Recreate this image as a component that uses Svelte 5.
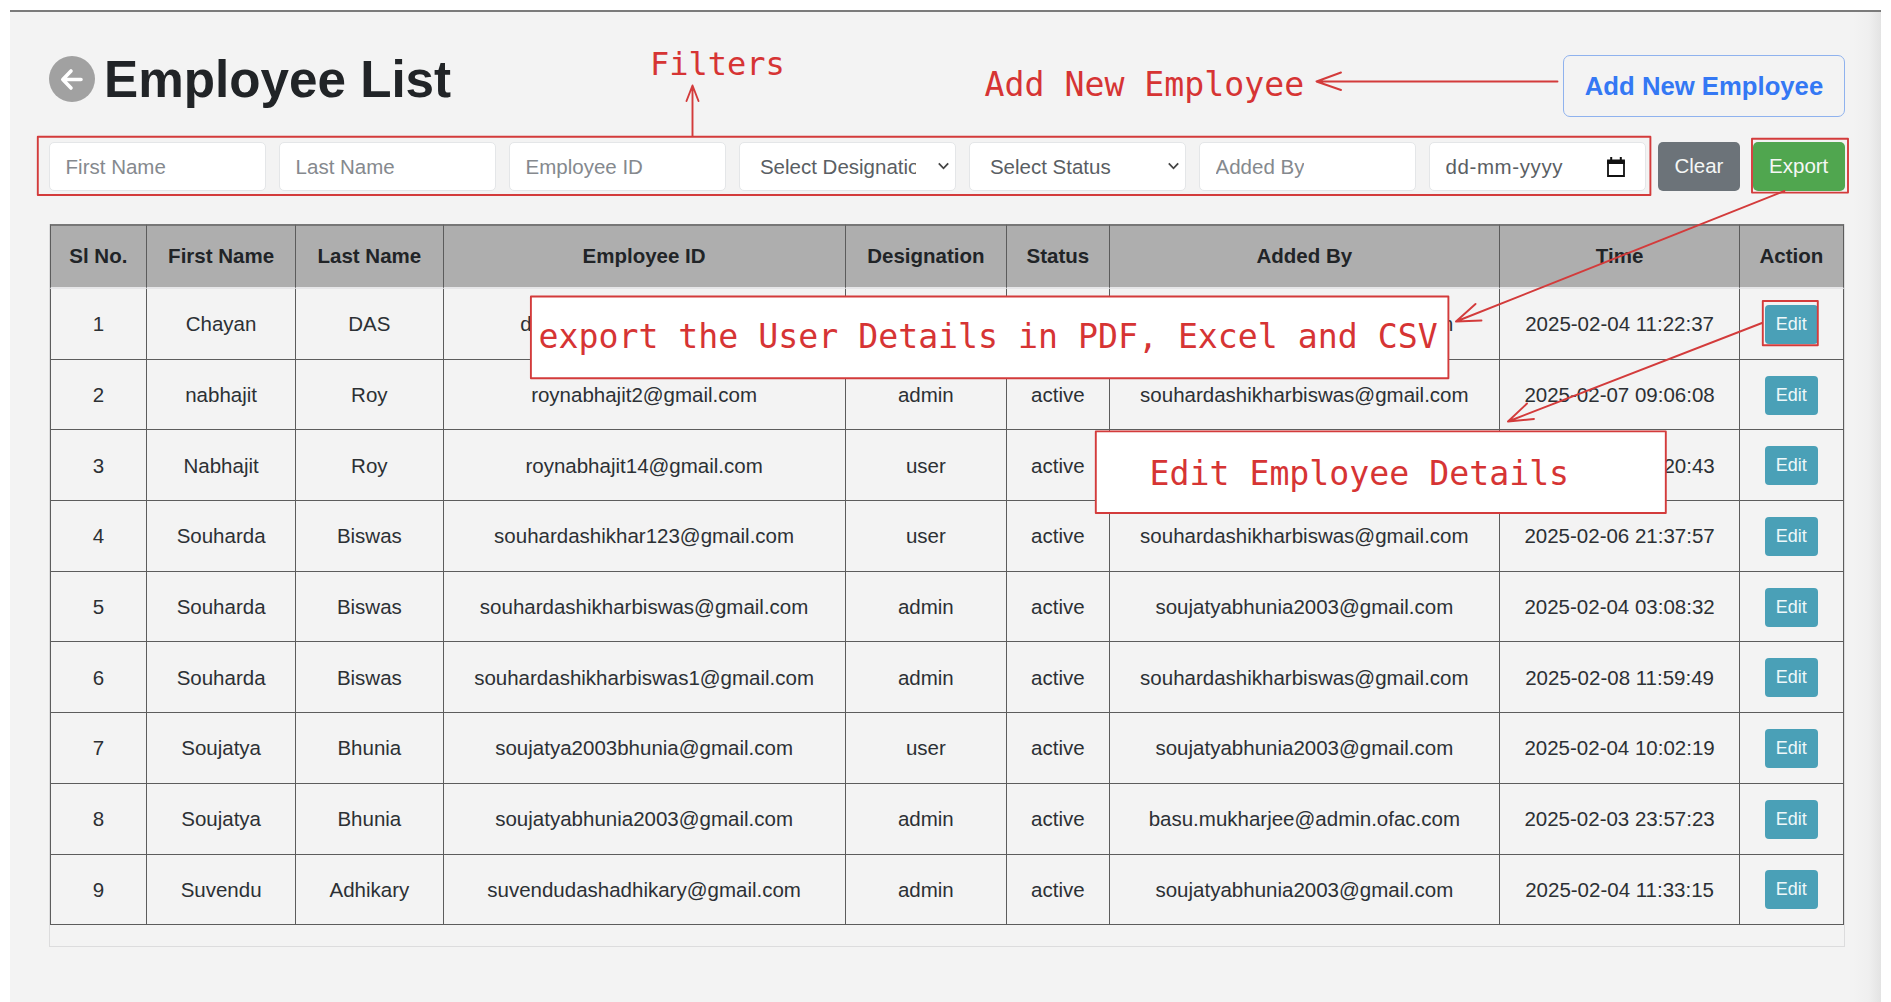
<script>
  const columns = ['Sl No.', 'First Name', 'Last Name', 'Employee ID', 'Designation', 'Status', 'Added By', 'Time', 'Action'];

  const employees = [
    ['Chayan', 'DAS', 'daschayan203@gmail.com', '', '', 'soujatyabhunia2003@gmail.com', '2025-02-04 11:22:37'],
    ['nabhajit', 'Roy', 'roynabhajit2@gmail.com', 'admin', 'active', 'souhardashikharbiswas@gmail.com', '2025-02-07 09:06:08'],
    ['Nabhajit', 'Roy', 'roynabhajit14@gmail.com', 'user', 'active', '', '2025-02-06 18:20:43'],
    ['Souharda', 'Biswas', 'souhardashikhar123@gmail.com', 'user', 'active', 'souhardashikharbiswas@gmail.com', '2025-02-06 21:37:57'],
    ['Souharda', 'Biswas', 'souhardashikharbiswas@gmail.com', 'admin', 'active', 'soujatyabhunia2003@gmail.com', '2025-02-04 03:08:32'],
    ['Souharda', 'Biswas', 'souhardashikharbiswas1@gmail.com', 'admin', 'active', 'souhardashikharbiswas@gmail.com', '2025-02-08 11:59:49'],
    ['Soujatya', 'Bhunia', 'soujatya2003bhunia@gmail.com', 'user', 'active', 'soujatyabhunia2003@gmail.com', '2025-02-04 10:02:19'],
    ['Soujatya', 'Bhunia', 'soujatyabhunia2003@gmail.com', 'admin', 'active', 'basu.mukharjee@admin.ofac.com', '2025-02-03 23:57:23'],
    ['Suvendu', 'Adhikary', 'suvendudashadhikary@gmail.com', 'admin', 'active', 'soujatyabhunia2003@gmail.com', '2025-02-04 11:33:15']
  ];

  const filters = [
    { kind: 'text', label: 'First Name' },
    { kind: 'text', label: 'Last Name' },
    { kind: 'text', label: 'Employee ID' },
    { kind: 'select', label: 'Select Designation' },
    { kind: 'select', label: 'Select Status' },
    { kind: 'text', label: 'Added By' },
    { kind: 'date', label: 'dd-mm-yyyy' }
  ];
</script>

<main class="panel">
  <header class="head">
    <button class="back" aria-label="Back">
      <svg width="46" height="46" viewBox="0 0 46 46">
        <circle cx="23" cy="23" r="23" fill="#a1a1a1" />
        <path d="M32 23.5H14.5M22 15L13.8 23.5l8.2 8.5" fill="none" stroke="#fff" stroke-width="3.6" stroke-linecap="round" stroke-linejoin="round" />
      </svg>
    </button>
    <h1>Employee List</h1>
    <button class="add">Add New Employee</button>
  </header>

  <div class="filters">
    {#each filters as f}
      <div class="field {f.kind}">
        <span class="value">{f.label}</span>
        {#if f.kind === 'select'}
          <svg class="chevron" width="13" height="9" viewBox="0 0 13 9"><path d="M1.8 1.3l4.7 5 4.7-5" fill="none" stroke="#444" stroke-width="1.8" /></svg>
        {:else if f.kind === 'date'}
          <svg class="calendar" width="18" height="20" viewBox="0 0 18 20"><path d="M1 4.5h16V19H1z" fill="none" stroke="#111" stroke-width="1.8" /><path d="M.1 2.5h17.8V7H.1zM3.2 0h2v3h-2zM12.8 0h2v3h-2z" fill="#111" /></svg>
        {/if}
      </div>
    {/each}
    <button class="btn clear">Clear</button>
    <button class="btn export">Export</button>
  </div>

  <div class="table-wrap">
    <table>
      <thead>
        <tr>
          {#each columns as c}<th>{c}</th>{/each}
        </tr>
      </thead>
      <tbody>
        {#each employees as row, i}
          <tr>
            <td>{i + 1}</td>
            {#each row as cell}<td>{cell}</td>{/each}
            <td><button class="edit">Edit</button></td>
          </tr>
        {/each}
      </tbody>
    </table>
  </div>
</main>

<svg class="notes" width="1891" height="1002" viewBox="0 0 1891 1002">
  <g class="lines">
    <rect x="37.8" y="136.7" width="1612.6" height="58.3" />
    <rect x="1752" y="138.8" width="96" height="53.8" />
    <rect x="1762.8" y="301" width="55" height="44.3" />
    <path d="M692.5 136V86M686.5 101l6-15.5 6 15.5" />
    <path d="M1557.5 81.5H1318M1341 72.5l-24.5 9 24.5 8.5" />
    <path d="M1784.5 191L1456 321.5M1475.5 304L1456 321.5l25.5-1" />
    <path d="M1762 323L1508 421.5M1527 403.5l-19 18 26-2.5" />
    <rect class="box" x="530.9" y="296.5" width="917.5" height="81.8" />
    <rect class="box" x="1095.8" y="431.4" width="570" height="81.6" />
  </g>
  <g class="labels">
    <text class="small" x="650" y="74.5">Filters</text>
    <text x="984.5" y="95.5">Add New Employee</text>
    <text x="538.5" y="347.5">export the User Details in PDF, Excel and CSV</text>
    <text x="1149.5" y="484.5">Edit Employee Details</text>
  </g>
</svg>

<style>
  :global(body) {
    margin: 0;
    background: #fff;
    overflow: hidden;
  }
  .panel {
    box-sizing: border-box;
    height: 992px;
    margin: 10px 10px 0;
    padding: 0 36px 0 38.6px;
    border-top: 2px solid #7b7b7b;
    background: linear-gradient(to left, #e3e3e3, #efefef 12px, #f3f3f3 28px);
    font-family: 'Liberation Sans', Arial, sans-serif;
    font-size: 20.5px;
    color: #2c3034;
  }
  button {
    padding: 0;
    border: 0;
    font-family: inherit;
    font-size: inherit;
  }
  .head {
    display: flex;
    align-items: flex-start;
    height: 130px;
  }
  .back {
    width: 46px;
    height: 46px;
    margin-top: 44px;
    background: none;
  }
  .back svg {
    display: block;
  }
  h1 {
    margin: 38px 0 0 9.5px;
    font-size: 51.2px;
    line-height: 60px;
    color: #212427;
  }
  .add {
    box-sizing: border-box;
    width: 282px;
    height: 62px;
    margin: 43px 0 0 auto;
    border: 1.5px solid #8fb2ee;
    border-radius: 7px;
    background: transparent;
    color: #3478f4;
    font-size: 25.7px;
    font-weight: 700;
  }
  .filters {
    display: flex;
    gap: 12.8px;
    height: 49px;
  }
  .field {
    box-sizing: border-box;
    display: flex;
    align-items: center;
    justify-content: space-between;
    width: 217.2px;
    flex: none;
    padding: 0 16px;
    border: 1px solid #e4e6e8;
    border-radius: 5px;
    background: #fff;
    color: #85898e;
  }
  .value {
    overflow: hidden;
    white-space: nowrap;
    line-height: 28px;
  }
  .select {
    padding: 0 5px 0 20.4px;
    color: #5a5e63;
  }
  .select .value {
    width: 156px;
  }
  .date {
    padding-right: 20px;
    color: #5a5e63;
    letter-spacing: 0.6px;
  }
  .btn {
    flex: none;
    padding-bottom: 1px;
    border-radius: 5px;
    color: #f5f7f5;
  }
  .clear {
    width: 82px;
    background: #6c7379;
    margin-left: -0.6px;
  }
  .export {
    width: 92px;
    background: #50a64f;
  }
  .table-wrap {
    box-sizing: border-box;
    width: 1796px;
    height: 723px;
    margin-top: 33px;
    border: 1px solid #dcdcdd;
  }
  table {
    display: block;
    margin-top: -1px;
  }
  thead,
  tbody {
    display: block;
  }
  tr {
    display: grid;
    grid-template-columns: 97.5px 149px 147.5px 402px 161.5px 102.5px 390.5px 240px 103.5px;
    height: 70.7px;
  }
  thead tr {
    height: 65px;
  }
  th,
  td {
    box-sizing: border-box;
    display: flex;
    align-items: center;
    justify-content: center;
    padding: 0;
    border-right: 1px solid #5c5c5c;
    border-bottom: 1px solid #5c5c5c;
    white-space: nowrap;
  }
  th:first-child,
  td:first-child {
    border-left: 1px solid #5c5c5c;
  }
  td {
    padding-top: 1px;
  }
  th {
    padding-bottom: 1px;
    border-top: 2px solid #777;
    border-bottom: 2px solid #e6e6e8;
    background: #aeaeae;
    color: #212427;
  }
  .edit {
    width: 53px;
    height: 39px;
    border-radius: 4px;
    background: #4aa0b7;
    color: #eef8fa;
    font-size: 18px;
  }
  .notes {
    position: absolute;
    top: 0;
    left: 0;
    pointer-events: none;
  }
  .lines {
    fill: none;
    stroke: #d33b3b;
    stroke-width: 1.9;
    stroke-linecap: round;
    stroke-linejoin: round;
  }
  .box {
    fill: #fff;
  }
  .labels {
    fill: #d63434;
    font-family: 'DejaVu Sans Mono', monospace;
    font-size: 33.2px;
    white-space: pre;
  }
  .small {
    font-size: 32px;
  }
</style>
